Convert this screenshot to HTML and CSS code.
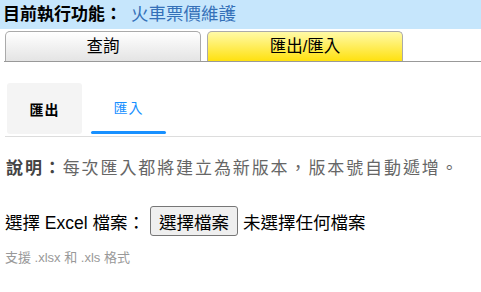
FILE: index.html
```html
<!DOCTYPE html>
<html lang="zh-Hant">

<head>
    <meta charset="UTF-8">
    <meta name="viewport" content="width=device-width, initial-scale=1.0">
    <title>火車票價維護</title>
    <link rel="stylesheet" href="styles.css">
</head>

<body>
    <div class="topbar">
        <span class="label">目前執行功能：</span><span class="value">火車票價維護</span>
    </div>

    <div class="tabs">
        <div class="tab">查詢</div>
        <div class="tab active">匯出/匯入</div>
    </div>

    <div class="subtabs">
        <div class="subtab export">
            <div class="subtab-text">匯出</div>
        </div>
        <div class="subtab import">
            <div class="subtab-text">匯入</div>
            <div class="subtab-bar"></div>
        </div>
    </div>

    <div class="content">
        <p class="note"><b>說明：</b>每次匯入都將建立為新版本，版本號自動遞增。</p>

        <div class="file-row">
            <span class="file-label">選擇 Excel 檔案：</span>
            <button class="file-btn" type="button">選擇檔案</button>
            <span class="file-name">未選擇任何檔案</span>
        </div>

        <p class="hint">支援 .xlsx 和 .xls 格式</p>
    </div>
</body>

</html>
```

FILE: styles.css
```css
* {
    margin: 0;
    padding: 0;
    box-sizing: border-box;
}

body {
    font-family: "Liberation Sans", "Noto Sans CJK TC", sans-serif;
    color: #000;
    background-color: #fff;
}

.topbar {
    height: 29px;
    line-height: 29px;
    padding-left: 3px;
    font-size: 17px;
    font-weight: bold;
    background-color: #c6e6fc;
}

.topbar .value {
    margin-left: 9px;
    font-size: 17.5px;
    color: #3470b8;
    font-weight: normal;
}

.tabs {
    display: flex;
    gap: 6px;
    margin: 2px 0 0 4px;
    padding-left: 1px;
    border-bottom: 1px solid #999;
}

.tab {
    width: 196px;
    height: 30px;
    line-height: 28px;
    text-align: center;
    font-size: 16.5px;
    border: 1px solid #aaa;
    border-bottom: none;
    border-radius: 5px 5px 0 0;
    background: linear-gradient(#fff, #e4e4e4);
}

.tab.active {
    background: linear-gradient(#fffaa8, #ffe10f);
}

.subtabs {
    display: flex;
    gap: 9px;
    margin: 21px 0 0 5px;
    padding: 0 0 2px 2px;
    border-bottom: 1px solid #ddd;
}

.subtab {
    display: flex;
    flex-direction: column;
    width: 75px;
    height: 51px;
    font-size: 14px;
}

.subtab-text {
    flex: 1;
    display: flex;
    align-items: center;
    justify-content: center;
    letter-spacing: 1px;
}

.export {
    background-color: #f4f4f4;
    border-radius: 3px;
    font-weight: bold;
}

.import {
    color: #1890ff;
}

.subtab-bar {
    height: 3px;
    border-radius: 2px;
    background-color: #1890ff;
}

.content {
    padding: 0 6px;
}

.note {
    margin-top: 17px;
    font-size: 17px;
    letter-spacing: 1.9px;
    color: #666;
}

.note b {
    color: #444;
}

.file-row {
    display: flex;
    align-items: center;
    margin-top: 27px;
    margin-left: -1px;
    font-size: 17.5px;
}

.file-btn {
    height: 30px;
    margin: 0 5px 0 5px;
    padding: 0 8px;
    font-family: inherit;
    font-size: 17.5px;
    background-color: #efefef;
    border: 1px solid #767676;
    border-radius: 3px;
}

.hint {
    margin-top: 11px;
    margin-left: -1px;
    font-size: 13px;
    color: #999;
}
```
